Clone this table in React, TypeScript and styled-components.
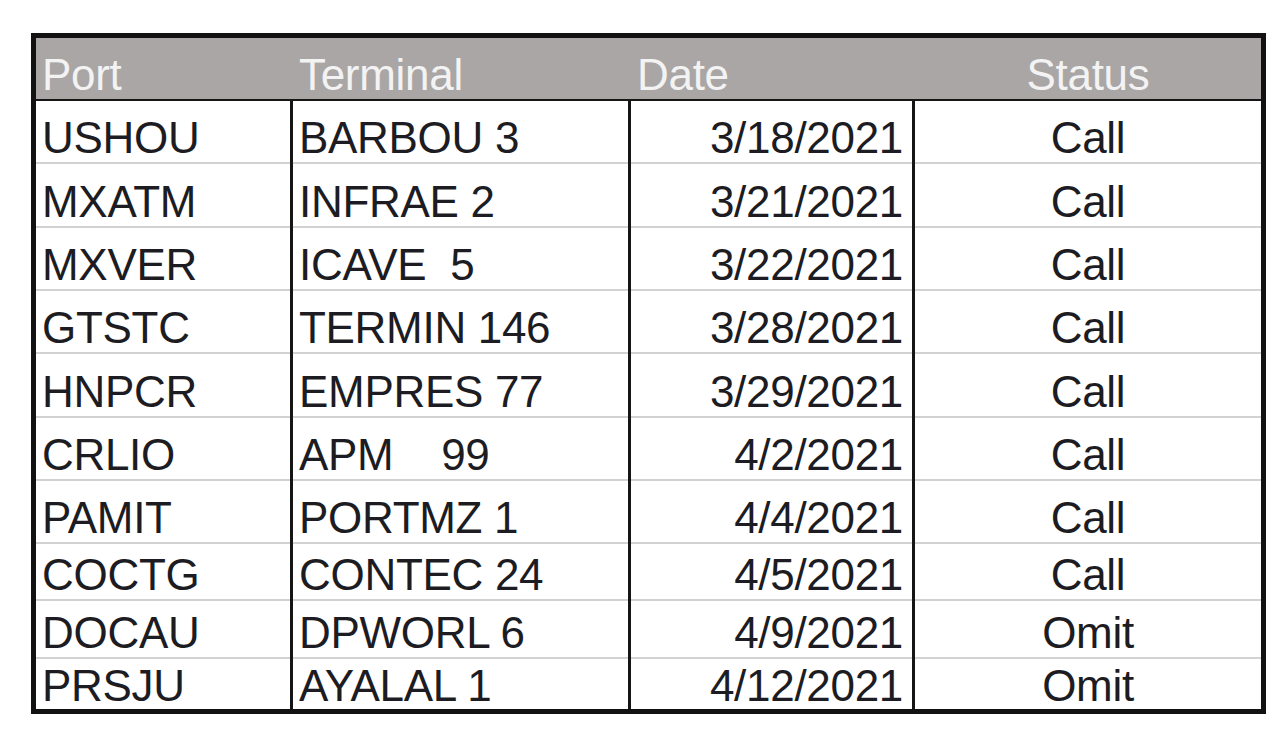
import React from "react";
import styled, { createGlobalStyle } from "styled-components";

const Global = createGlobalStyle`
  html, body { margin: 0; padding: 0; background: #ffffff; }
  body { font-family: "Liberation Sans", Arial, sans-serif; }
`;

const Page = styled.div`
  width: 1280px;
  height: 733px;
  padding: 33px 0 0 31px;
  box-sizing: border-box;
  background: #ffffff;
`;

const Table = styled.div`
  width: 1235px;
  border: 5px solid #121212;
  box-sizing: border-box;
  display: flex;
  flex-direction: column;
  font-family: "Liberation Sans", Arial, sans-serif;
  font-size: 44px;
  line-height: 44px;
`;

const COLS = "254px 338px 284px 1fr";

const HeaderRow = styled.div`
  display: grid;
  grid-template-columns: ${COLS};
  height: 63px;
  box-sizing: border-box;
  background: #aaa6a5;
  border-bottom: 2px solid #161616;
`;

const HeadCell = styled.div<{ $align: "left" | "right" | "center"; $first?: boolean }>`
  display: flex;
  align-items: flex-end;
  justify-content: ${(p) =>
    p.$align === "left" ? "flex-start" : p.$align === "right" ? "flex-end" : "center"};
  padding: 0 ${(p) => (p.$align === "right" ? "9px" : "0")} 2px ${(p) =>
    p.$align === "left" ? "6px" : "0"};
  border-left: ${(p) => (p.$first ? "0" : "3px solid transparent")};
  color: #f3f3f3;
  white-space: pre;
  letter-spacing: -0.3px;
`;

const Row = styled.div<{ $h: number; $last?: boolean }>`
  display: grid;
  grid-template-columns: ${COLS};
  height: ${(p) => p.$h}px;
  box-sizing: border-box;
  border-bottom: ${(p) => (p.$last ? "0" : "2px solid #d2d2d2")};
`;

const Cell = styled.div<{ $align: "left" | "right" | "center"; $first?: boolean; $last?: boolean }>`
  display: flex;
  align-items: flex-end;
  justify-content: ${(p) =>
    p.$align === "left" ? "flex-start" : p.$align === "right" ? "flex-end" : "center"};
  padding: 0 ${(p) => (p.$align === "right" ? "9px" : "0")} ${(p) => (p.$last ? "1px" : "4px")}
    ${(p) => (p.$align === "left" ? "6px" : "0")};
  border-left: ${(p) => (p.$first ? "0" : "3px solid #151515")};
  margin-bottom: ${(p) => (p.$last ? "0" : "-2px")};
  color: #1c1c22;
  white-space: pre;
  letter-spacing: -0.3px;
`;

type Rec = { port: string; terminal: string; date: string; status: string; h: number };

const rows: Rec[] = [
  { port: "USHOU", terminal: "BARBOU 3", date: "3/18/2021", status: "Call", h: 63 },
  { port: "MXATM", terminal: "INFRAE 2", date: "3/21/2021", status: "Call", h: 64 },
  { port: "MXVER", terminal: "ICAVE  5", date: "3/22/2021", status: "Call", h: 63 },
  { port: "GTSTC", terminal: "TERMIN 146", date: "3/28/2021", status: "Call", h: 63 },
  { port: "HNPCR", terminal: "EMPRES 77", date: "3/29/2021", status: "Call", h: 64 },
  { port: "CRLIO", terminal: "APM    99", date: "4/2/2021", status: "Call", h: 63 },
  { port: "PAMIT", terminal: "PORTMZ 1", date: "4/4/2021", status: "Call", h: 63 },
  { port: "COCTG", terminal: "CONTEC 24", date: "4/5/2021", status: "Call", h: 57 },
  { port: "DOCAU", terminal: "DPWORL 6", date: "4/9/2021", status: "Omit", h: 58 },
  { port: "PRSJU", terminal: "AYALAL 1", date: "4/12/2021", status: "Omit", h: 50 },
];

export default function App() {
  return (
    <Page>
      <Global />
      <Table>
        <HeaderRow>
          <HeadCell $align="left" $first>Port</HeadCell>
          <HeadCell $align="left">Terminal</HeadCell>
          <HeadCell $align="left">Date</HeadCell>
          <HeadCell $align="center">Status</HeadCell>
        </HeaderRow>
        {rows.map((r, i) => {
          const last = i === rows.length - 1;
          return (
            <Row key={r.port} $h={r.h} $last={last}>
              <Cell $align="left" $first $last={last}>{r.port}</Cell>
              <Cell $align="left" $last={last}>{r.terminal}</Cell>
              <Cell $align="right" $last={last}>{r.date}</Cell>
              <Cell $align="center" $last={last}>{r.status}</Cell>
            </Row>
          );
        })}
      </Table>
    </Page>
  );
}
